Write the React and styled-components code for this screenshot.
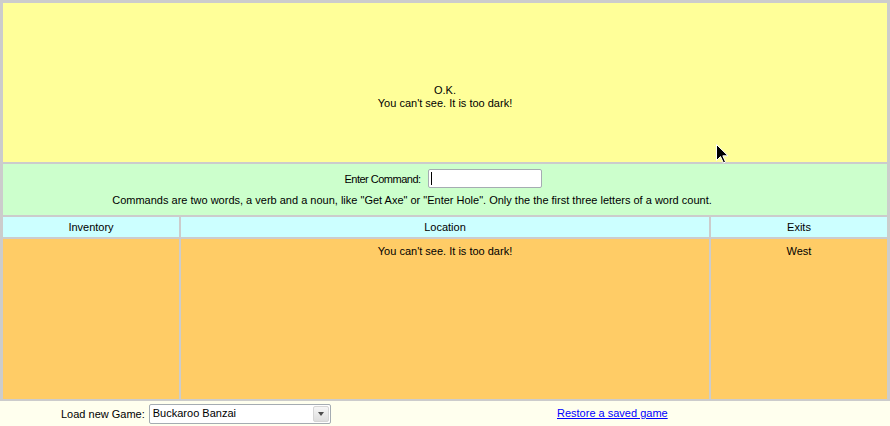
import React from 'react';
import styled, { createGlobalStyle } from 'styled-components';

const Global = createGlobalStyle`
  html, body { margin: 0; padding: 0; background: #FFFFEE; }
  body {
    font-family: "Liberation Sans", Arial, sans-serif;
    font-size: 11px;
    color: #000;
  }
`;

const Board = styled.div`
  width: 890px;
  box-sizing: border-box;
  background: #cccccc;
  padding: 3px 3px 2px 3px;
  display: grid;
  grid-template-columns: 176px 528px 176px;
  grid-template-rows: 159px 51px 20px 160px;
  gap: 2px;
`;

const Message = styled.div`
  grid-column: 1 / -1;
  background: #FFFF99;
  display: flex;
  flex-direction: column;
  align-items: center;
  justify-content: center;
  padding-top: 28px;
  box-sizing: border-box;
  line-height: 13px;
  position: relative;
`;

const Cursor = styled.svg`
  position: absolute;
  left: 713px;
  top: 141px;
  width: 13px;
  height: 20px;
`;

const CommandBar = styled.div`
  grid-column: 1 / -1;
  background: #CCFFCC;
  display: flex;
  flex-direction: column;
  align-items: center;
  padding-top: 5px;
  box-sizing: border-box;
`;

const CommandRow = styled.div`
  display: flex;
  align-items: center;
  gap: 7px;
  height: 19px;
  margin-right: 4px;
`;

const CommandLabel = styled.span`
  letter-spacing: -0.5px;
`;

const InputWrap = styled.div`
  position: relative;
  width: 114px;
  height: 19px;
`;

const TextInput = styled.input`
  width: 100%;
  height: 100%;
  box-sizing: border-box;
  border: 1px solid #a5acb2;
  border-radius: 2px;
  background: #fff;
  padding: 0 3px;
  margin: 0;
  outline: none;
  caret-color: transparent;
  font: inherit;
`;

const Caret = styled.span`
  position: absolute;
  left: 3px;
  top: 3px;
  width: 1px;
  height: 13px;
  background: #000;
`;

const Hint = styled.div`
  margin-top: 6px;
  margin-right: 66px;
  line-height: 13px;
`;

const HeaderCell = styled.div`
  background: #CCFFFF;
  display: flex;
  align-items: center;
  justify-content: center;
  line-height: 13px;
`;

const BodyCell = styled.div`
  background: #FFCC66;
  text-align: center;
  padding-top: 6px;
  line-height: 13px;
  box-sizing: border-box;
`;

const Footer = styled.div`
  display: grid;
  grid-template-columns: 557px auto;
  align-items: center;
  height: 25px;
`;

const LoadGroup = styled.div`
  display: flex;
  align-items: center;
  gap: 4px;
  padding-left: 61px;
`;

const Select = styled.div`
  width: 182px;
  height: 20px;
  box-sizing: border-box;
  border: 1px solid #a5acb2;
  border-radius: 2px;
  background: #fff;
  display: flex;
  align-items: center;
  justify-content: space-between;
  padding: 1px 1px 1px 3px;
`;

const SelectText = styled.span`
  line-height: 13px;
`;

const ArrowButton = styled.span`
  width: 16px;
  height: 16px;
  box-sizing: border-box;
  border: 1px solid #d6d6d6;
  border-radius: 2px;
  background: linear-gradient(#f6f6f6, #dedede);
  display: flex;
  align-items: center;
  justify-content: center;
  &::after {
    content: "";
    border-left: 3.5px solid transparent;
    border-right: 3.5px solid transparent;
    border-top: 4px solid #4d4d4d;
    margin-top: 1px;
  }
`;

const Link = styled.a`
  color: #0000ff;
  text-decoration: underline;
  line-height: 13px;
  cursor: pointer;
`;

export default function App() {
  return (
    <>
      <Global />
      <Board>
        <Message>
          <div>O.K.</div>
          <div>You can't see. It is too dark!</div>
          <Cursor viewBox="0 0 13 20">
            <path d="M0.5 0.5 L0.5 16.5 L4.5 12.5 L7.5 19 L9.5 18 L6.8 11.8 L12 11.8 Z" fill="#000" stroke="#fff" strokeWidth="1" />
          </Cursor>
        </Message>
        <CommandBar>
          <CommandRow>
            <CommandLabel>Enter Command:</CommandLabel>
            <InputWrap>
              <TextInput type="text" defaultValue="" />
              <Caret />
            </InputWrap>
          </CommandRow>
          <Hint>
            Commands are two words, a verb and a noun, like "Get Axe" or "Enter Hole". Only the the first three letters of a word count.
          </Hint>
        </CommandBar>
        <HeaderCell>Inventory</HeaderCell>
        <HeaderCell>Location</HeaderCell>
        <HeaderCell>Exits</HeaderCell>
        <BodyCell></BodyCell>
        <BodyCell>You can't see. It is too dark!</BodyCell>
        <BodyCell>West</BodyCell>
      </Board>
      <Footer>
        <LoadGroup>
          <span>Load new Game:</span>
          <Select>
            <SelectText>Buckaroo Banzai</SelectText>
            <ArrowButton />
          </Select>
        </LoadGroup>
        <div>
          <Link>Restore a saved game</Link>
        </div>
      </Footer>
    </>
  );
}
